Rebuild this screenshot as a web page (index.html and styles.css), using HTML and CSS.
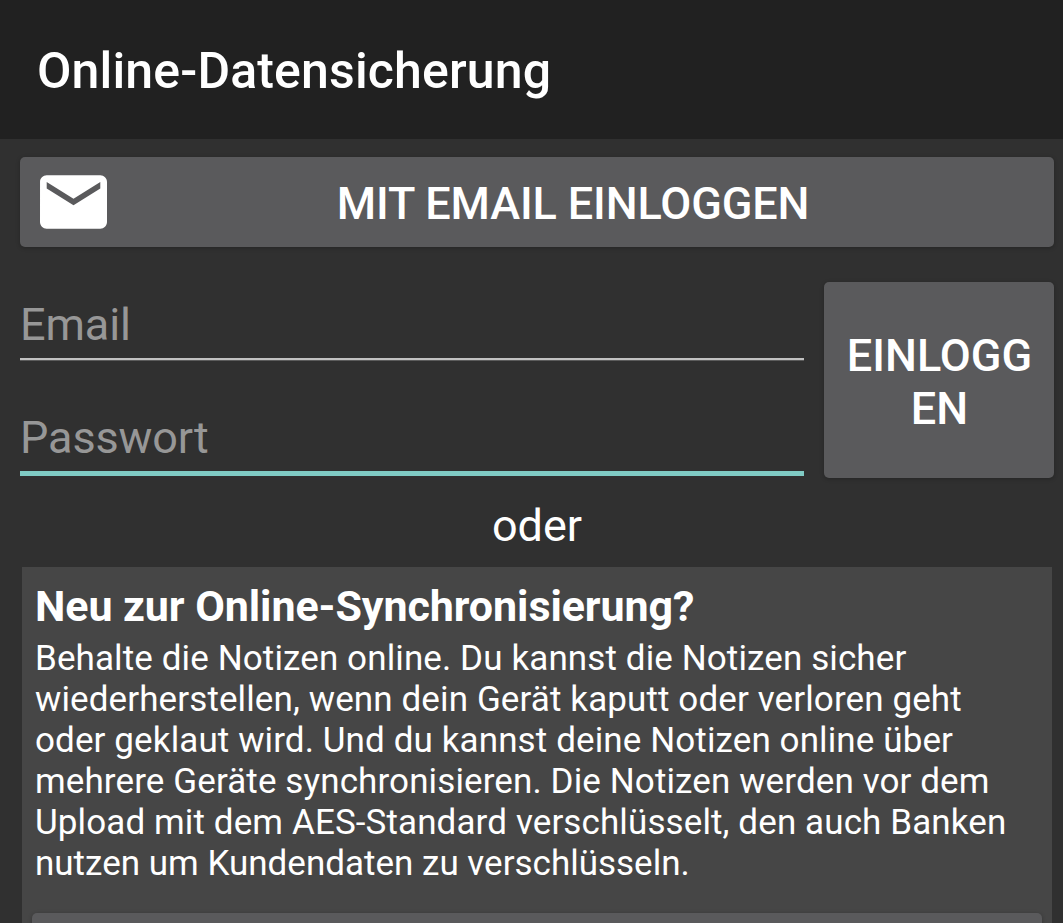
FILE: index.html
```html
<!DOCTYPE html>
<html lang="de">
<head>
    <meta charset="UTF-8">
    <title>Online-Datensicherung</title>
    <link rel="stylesheet" href="styles.css">
</head>
<body>
    <header class="toolbar">
        <h1>Online-Datensicherung</h1>
    </header>

    <main>
        <button type="button" class="btn email-btn">
            <svg class="mail-icon" width="67" height="54" viewBox="2 4 20 16">
                <path fill="#fff" d="M20 4H4c-1.1 0-1.99.9-1.99 2L2 18c0 1.1.9 2 2 2h16c1.1 0 2-.9 2-2V6c0-1.1-.9-2-2-2zm0 4l-8 5-8-5V6l8 5 8-5v2z"/>
            </svg>
            <span>Mit Email einloggen</span>
        </button>

        <form class="login">
            <div class="fields">
                <input type="text" name="email" placeholder="Email">
                <input type="password" name="password" class="active" placeholder="Passwort">
            </div>
            <button type="button" class="btn login-btn">Einlogg<br>en</button>
        </form>

        <p class="or">oder</p>

        <section class="card">
            <h2>Neu zur Online-Synchronisierung?</h2>
            <p>Behalte die Notizen online. Du kannst die Notizen sicher<br>
            wiederherstellen, wenn dein Gerät kaputt oder verloren geht<br>
            oder geklaut wird. Und du kannst deine Notizen online über<br>
            mehrere Geräte synchronisieren. Die Notizen werden vor dem<br>
            Upload mit dem AES-Standard verschlüsselt, den auch Banken<br>
            <span class="last">nutzen um Kundendaten zu verschlüsseln.</span></p>
            <button type="button" class="btn register-btn" aria-label="Registrieren"></button>
        </section>
    </main>
</body>
</html>
```
FILE: styles.css
```css
* {
    box-sizing: border-box;
}

body {
    margin: 0;
    background-color: #303030;
    color: #fff;
    font-family: Roboto, sans-serif;
}

h1, h2, p {
    margin: 0;
}

.toolbar {
    height: 139px;
    padding: 41px 37px 0;
    background-color: #212121;
}

h1 {
    font-size: 50px;
    line-height: 60px;
    font-weight: 500;
    letter-spacing: 0.15px;
    white-space: nowrap;
}

main {
    padding: 18px 9px 0 20px;
}

.btn {
    border: none;
    border-radius: 5px;
    background-color: #5a5a5c;
    color: #fff;
    font-family: inherit;
    font-size: 45px;
    font-weight: 500;
    text-transform: uppercase;
    box-shadow: 0 1px 4px rgba(0, 0, 0, 0.25);
}

.email-btn {
    display: flex;
    align-items: center;
    width: 100%;
    height: 90px;
    padding: 0 20px;
}

.email-btn span {
    flex: 1;
    padding: 3px 0 0 5px;
    letter-spacing: -0.12px;
    text-align: center;
}

.mail-icon {
    margin-top: -1px;
}

.login {
    display: flex;
    gap: 20px;
    margin-top: 35px;
}

.fields {
    flex: 1;
    padding-top: 10px;
}

input {
    display: block;
    width: 100%;
    height: 68px;
    padding: 0 0 2px;
    border: none;
    border-bottom: 2px solid #c1c1c1;
    outline: none;
    background: none;
    box-shadow: 0 1px 0 #5c5c5c;
    color: #fff;
    font-family: inherit;
    font-size: 45px;
    letter-spacing: -0.12px;
}

input::placeholder {
    color: #979797;
    opacity: 1;
}

input.active {
    height: 71px;
    margin-top: 45px;
    border-bottom: 5px solid #80cbc4;
    box-shadow: none;
}

.login-btn {
    width: 230px;
    height: 196px;
    padding: 4px 0 0 1px;
    line-height: 53px;
}

.or {
    margin-top: 21px;
    font-size: 45px;
    line-height: 53px;
    text-align: center;
}

.card {
    height: 356px;
    margin: 15px 2px 0;
    padding: 13px 10px 0;
    overflow: hidden;
    background-color: #464646;
}

h2 {
    padding-left: 3px;
    font-size: 43px;
    line-height: 53px;
    letter-spacing: -0.07px;
}

.card p {
    margin-top: 5px;
    padding-left: 3px;
    font-size: 35px;
    line-height: 41px;
    letter-spacing: 0.11px;
    white-space: nowrap;
}

.card .last {
    letter-spacing: 0;
}

.register-btn {
    display: block;
    width: 100%;
    height: 90px;
    margin-top: 29px;
}
```
